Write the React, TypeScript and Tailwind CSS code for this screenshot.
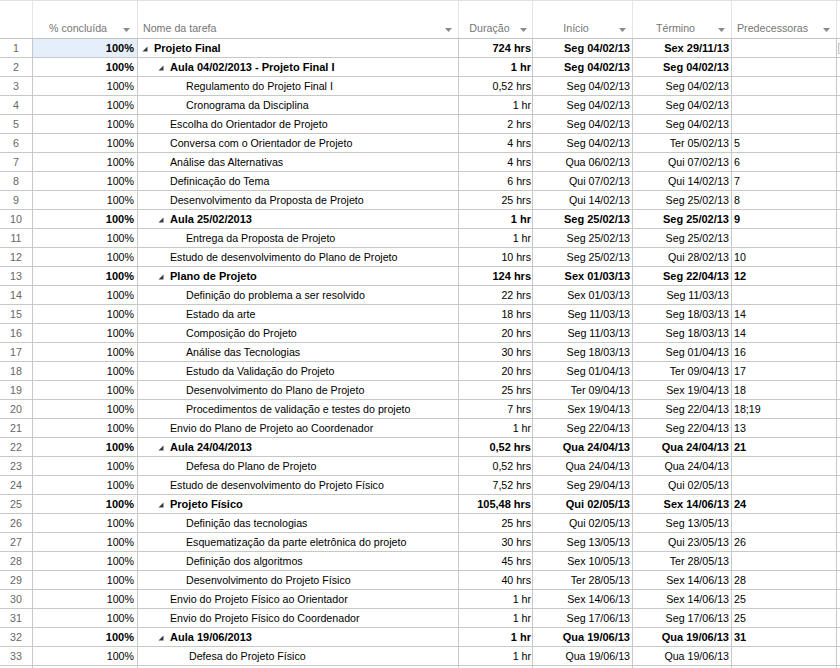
import React from "react";

type Row = {
  name: string;
  level: number;
  bold?: boolean;
  summary?: boolean;
  dur: string;
  start: string;
  end: string;
  pred: string;
  extra?: boolean;
};

const rows: Row[] = [
  { name: "Projeto Final", level: 0, bold: true, summary: true, dur: "724 hrs", start: "Seg 04/02/13", end: "Sex 29/11/13", pred: "" },
  { name: "Aula 04/02/2013 - Projeto Final I", level: 1, bold: true, summary: true, dur: "1 hr", start: "Seg 04/02/13", end: "Seg 04/02/13", pred: "" },
  { name: "Regulamento do Projeto Final I", level: 2, dur: "0,52 hrs", start: "Seg 04/02/13", end: "Seg 04/02/13", pred: "" },
  { name: "Cronograma da Disciplina", level: 2, dur: "1 hr", start: "Seg 04/02/13", end: "Seg 04/02/13", pred: "" },
  { name: "Escolha do Orientador de Projeto", level: 1, dur: "2 hrs", start: "Seg 04/02/13", end: "Seg 04/02/13", pred: "" },
  { name: "Conversa com o Orientador de Projeto", level: 1, dur: "4 hrs", start: "Seg 04/02/13", end: "Ter 05/02/13", pred: "5" },
  { name: "Análise das Alternativas", level: 1, dur: "4 hrs", start: "Qua 06/02/13", end: "Qui 07/02/13", pred: "6" },
  { name: "Definicação do Tema", level: 1, dur: "6 hrs", start: "Qui 07/02/13", end: "Qui 14/02/13", pred: "7" },
  { name: "Desenvolvimento da Proposta de Projeto", level: 1, dur: "25 hrs", start: "Qui 14/02/13", end: "Seg 25/02/13", pred: "8" },
  { name: "Aula 25/02/2013", level: 1, bold: true, summary: true, dur: "1 hr", start: "Seg 25/02/13", end: "Seg 25/02/13", pred: "9" },
  { name: "Entrega da Proposta de Projeto", level: 2, dur: "1 hr", start: "Seg 25/02/13", end: "Seg 25/02/13", pred: "" },
  { name: "Estudo de desenvolvimento do Plano de Projeto", level: 1, dur: "10 hrs", start: "Seg 25/02/13", end: "Qui 28/02/13", pred: "10" },
  { name: "Plano de Projeto", level: 1, bold: true, summary: true, dur: "124 hrs", start: "Sex 01/03/13", end: "Seg 22/04/13", pred: "12" },
  { name: "Definição do problema a ser resolvido", level: 2, dur: "22 hrs", start: "Sex 01/03/13", end: "Seg 11/03/13", pred: "" },
  { name: "Estado da arte", level: 2, dur: "18 hrs", start: "Seg 11/03/13", end: "Seg 18/03/13", pred: "14" },
  { name: "Composição do Projeto", level: 2, dur: "20 hrs", start: "Seg 11/03/13", end: "Seg 18/03/13", pred: "14" },
  { name: "Análise das Tecnologias", level: 2, dur: "30 hrs", start: "Seg 18/03/13", end: "Seg 01/04/13", pred: "16" },
  { name: "Estudo da Validação do Projeto", level: 2, dur: "20 hrs", start: "Seg 01/04/13", end: "Ter 09/04/13", pred: "17" },
  { name: "Desenvolvimento do Plano de Projeto", level: 2, dur: "25 hrs", start: "Ter 09/04/13", end: "Sex 19/04/13", pred: "18" },
  { name: "Procedimentos de validação e testes do projeto", level: 2, dur: "7 hrs", start: "Sex 19/04/13", end: "Seg 22/04/13", pred: "18;19" },
  { name: "Envio do Plano de Projeto ao Coordenador", level: 1, dur: "1 hr", start: "Seg 22/04/13", end: "Seg 22/04/13", pred: "13" },
  { name: "Aula 24/04/2013", level: 1, bold: true, summary: true, dur: "0,52 hrs", start: "Qua 24/04/13", end: "Qua 24/04/13", pred: "21" },
  { name: "Defesa do Plano de Projeto", level: 2, dur: "0,52 hrs", start: "Qua 24/04/13", end: "Qua 24/04/13", pred: "" },
  { name: "Estudo de desenvolvimento do Projeto Físico", level: 1, dur: "7,52 hrs", start: "Seg 29/04/13", end: "Qui 02/05/13", pred: "" },
  { name: "Projeto Físico", level: 1, bold: true, summary: true, dur: "105,48 hrs", start: "Qui 02/05/13", end: "Sex 14/06/13", pred: "24" },
  { name: "Definição das tecnologias", level: 2, dur: "25 hrs", start: "Qui 02/05/13", end: "Seg 13/05/13", pred: "" },
  { name: "Esquematização da parte eletrônica do projeto", level: 2, dur: "30 hrs", start: "Seg 13/05/13", end: "Qui 23/05/13", pred: "26" },
  { name: "Definição dos algoritmos", level: 2, dur: "45 hrs", start: "Sex 10/05/13", end: "Ter 28/05/13", pred: "" },
  { name: "Desenvolvimento do Projeto Físico", level: 2, dur: "40 hrs", start: "Ter 28/05/13", end: "Sex 14/06/13", pred: "28" },
  { name: "Envio do Projeto Físico ao Orientador", level: 1, dur: "1 hr", start: "Sex 14/06/13", end: "Sex 14/06/13", pred: "25" },
  { name: "Envio do Projeto Físico do Coordenador", level: 1, dur: "1 hr", start: "Seg 17/06/13", end: "Seg 17/06/13", pred: "25" },
  { name: "Aula 19/06/2013", level: 1, bold: true, summary: true, dur: "1 hr", start: "Qua 19/06/13", end: "Qua 19/06/13", pred: "31" },
  { name: "Defesa do Projeto Físico", level: 2, extra: true, dur: "1 hr", start: "Qua 19/06/13", end: "Qua 19/06/13", pred: "" },
];

const indentClass = ["ml-0", "ml-[16px]", "ml-[32px]"];

function Arrow() {
  return (
    <svg width="7" height="4" viewBox="0 0 7 4" className="shrink-0 mt-[4px]">
      <polygon points="0,0 7,0 3.5,4" fill="#8a8a8a" />
    </svg>
  );
}

function Expander() {
  return (
    <svg width="6" height="6" viewBox="0 0 6 6" className="mt-[1px]">
      <polygon points="5.5,0.5 5.5,5.5 0.5,5.5" fill="#3a3a3a" />
    </svg>
  );
}

function HeaderCell({ label, w, center = true, pr = "mr-[6px]" }: { label: string; w: string; center?: boolean; pr?: string }) {
  return (
    <div className={`${w} h-full shrink-0 border-r border-[#e4e4e4] flex items-center pt-[17px]`}>
      <span className={center ? "flex-1 text-center whitespace-nowrap" : "flex-1 pl-[5px] whitespace-nowrap"}>{label}</span>
      <span className={pr}>
        <Arrow />
      </span>
    </div>
  );
}

export default function App() {
  return (
    <div
      className="w-[840px] h-[668px] overflow-hidden bg-white text-black text-[10.67px]"
      style={{ fontFamily: '"Liberation Sans", Arial, sans-serif' }}
    >
      <div className="flex h-[39px] border-t border-b border-t-[#e2e2e2] border-b-[#c4c4c4] text-[#767676]">
        <div className="w-[33px] h-full shrink-0 border-r border-[#e4e4e4]" />
        <HeaderCell label="% concluída" w="w-[105px]" pr="mr-[7px]" />
        <HeaderCell label="Nome da tarefa" w="w-[321px]" center={false} />
        <HeaderCell label="Duração" w="w-[74px]" pr="mr-[5px]" />
        <HeaderCell label="Início" w="w-[100px]" />
        <HeaderCell label="Término" w="w-[99px]" />
        <HeaderCell label="Predecessoras" w="w-[105px]" center={false} />
        <div className="flex-1" />
      </div>
      {rows.map((r, i) => {
        const b = r.bold ? "font-bold text-[11px]" : "";
        return (
          <div key={i} className="flex h-[19px] border-b border-[#c8c8c8]">
            <div className="w-[33px] shrink-0 border-r border-[#c8c8c8] flex items-center justify-center text-[#666]">
              {i + 1}
            </div>
            <div
              className={`w-[105px] shrink-0 border-r border-[#c8c8c8] flex items-center justify-end pr-[3px] ${b} ${
                i === 0 ? "bg-[#e5effb]" : ""
              }`}
            >
              100%
            </div>
            <div className={`w-[321px] shrink-0 border-r border-[#c8c8c8] flex items-center pl-[4px] whitespace-nowrap overflow-hidden ${b}`}>
              <div className={`${indentClass[r.level]} w-[12px] shrink-0 flex items-center ${r.extra ? "mr-[3px]" : ""}`}>
                {r.summary ? <Expander /> : null}
              </div>
              <span>{r.name}</span>
            </div>
            <div className={`w-[74px] shrink-0 border-r border-[#c8c8c8] flex items-center justify-end pr-[1px] whitespace-nowrap ${b}`}>
              {r.dur}
            </div>
            <div className={`w-[100px] shrink-0 border-r border-[#c8c8c8] flex items-center justify-end pr-[2px] whitespace-nowrap ${b}`}>
              {r.start}
            </div>
            <div className={`w-[99px] shrink-0 border-r border-[#c8c8c8] flex items-center justify-end pr-[2px] whitespace-nowrap ${b}`}>
              {r.end}
            </div>
            <div className={`w-[105px] shrink-0 border-r border-[#c8c8c8] flex items-center pl-[2px] whitespace-nowrap ${b}`}>
              {r.pred}
            </div>
            <div className="flex-1 flex items-center">
              {i === 0 ? <div className="ml-[1px] w-[3px] h-[11px] border border-[#c8c8c8] bg-[#f0f0f0]" /> : null}
            </div>
          </div>
        );
      })}
      <div className="flex h-[19px] border-b border-[#c8c8c8]">
        <div className="w-[33px] shrink-0 border-r border-[#c8c8c8]" />
        <div className="w-[105px] shrink-0 border-r border-[#c8c8c8]" />
        <div className="w-[321px] shrink-0 border-r border-[#c8c8c8]" />
        <div className="w-[74px] shrink-0 border-r border-[#c8c8c8]" />
        <div className="w-[100px] shrink-0 border-r border-[#c8c8c8]" />
        <div className="w-[99px] shrink-0 border-r border-[#c8c8c8]" />
        <div className="w-[105px] shrink-0 border-r border-[#c8c8c8]" />
        <div className="flex-1" />
      </div>
    </div>
  );
}
